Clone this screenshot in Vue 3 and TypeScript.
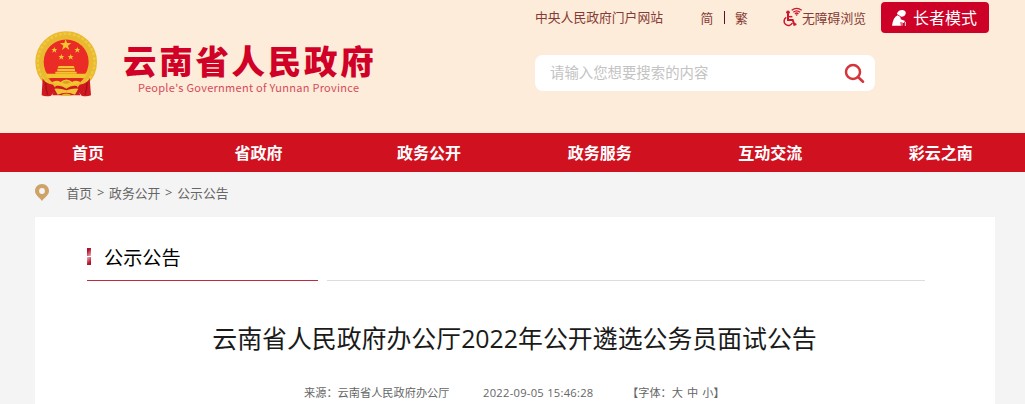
<!-- src/App.vue -->

<script setup lang="ts">
import { ref } from 'vue'

interface Link {
  label: string
  href: string
}

const navItems: Link[] = [
  { label: '首页', href: '#' },
  { label: '省政府', href: '#' },
  { label: '政务公开', href: '#' },
  { label: '政务服务', href: '#' },
  { label: '互动交流', href: '#' },
  { label: '彩云之南', href: '#' },
]

const crumbs: Link[] = [
  { label: '首页', href: '#' },
  { label: '政务公开', href: '#' },
  { label: '公示公告', href: '#' },
]

const fontSizes = ['大', '中', '小']

const keyword = ref('')
</script>

<template>
  <div class="page">
    <header class="header">
      <div class="brand">
        <svg class="emblem" viewBox="27 30 192 204">
          <circle cx="123.500" cy="126" r="80" fill="#ea2b26" stroke="#e9b92f" stroke-width="25" />
          <circle cx="123.500" cy="126" r="85" fill="none" stroke="#f1c940" stroke-width="7" stroke-dasharray="9 5" />
          <path d="M53 174 Q58 190 84 194 L94 208 L78 227 Q64 231 50 226 Z" fill="#cf1820" />
          <path d="M194 174 Q189 190 164 194 L154 208 L170 227 Q184 231 198 226 Z" fill="#cf1820" />
          <path d="M62 188 Q62 208 68 224 M186 188 Q186 208 180 224" fill="none" stroke="#a80e17" stroke-width="4" />
          <g fill="#f2c52f">
            <path d="M122 57 L126 69 L139 69 L129 77 L133 90 L122 82 L111 90 L115 77 L105 69 L118 69 Z" />
            <path id="star" d="M88 81 L90.500 87 L97 87 L92 91 L94 98 L88 94 L82 98 L84 91 L79 87 L85.500 87 Z" />
            <use href="#star" x="69" />
            <use href="#star" x="21" y="21" />
            <use href="#star" x="49" y="21" />
            <path d="M101 138 h45 l3 6 h-51 z M97 146 h53 v8 h-53 z M91 155 h64 v6 h-64 z" />
            <path d="M61 161 H186 Q184 169 179 174 H68 Q63 169 61 161 Z" />
          </g>
          <path d="M70 175 H177 L166 186 H81 Z" fill="#dd2922" />
          <path d="M82 186 Q98 178 106 186 Q124 171 142 186 Q150 178 166 186 Q158 198 143 194 Q124 208 105 194 Q90 198 82 186 Z" fill="#f2c52f" />
          <path d="M111 187 Q124 177 137 187 Q124 197 111 187 Z" fill="#d8a326" />
          <path d="M92 198 Q108 194 124 206 Q140 194 156 198 L166 226 H82 Z" fill="#cf1820" />
          <path d="M88 206 Q106 204 124 211 Q142 204 160 206 L150 224 Q124 213 98 224 Z" fill="#f0c437" />
          <path d="M106 227 Q124 214 142 227 Z" fill="#e5b22d" />
        </svg>
        <div class="brand-text">
          <h1>云南省人民政府</h1>
          <p>People's Government of Yunnan Province</p>
        </div>
      </div>

      <div class="tools">
        <div class="top-links">
          <a class="portal" href="#">中央人民政府门户网站</a>
          <a class="simplified" href="#">简</a>
          <span class="divider"></span>
          <a class="traditional" href="#">繁</a>
          <a class="barrier-free" href="#">
            <svg class="wheelchair" viewBox="36 21 63 63" fill="none" stroke="#cc1730">
              <circle cx="54" cy="37" r="5.500" fill="#cc1730" stroke="none" />
              <path d="M54 40 V60 H68 L73 74 L79 72" stroke-width="6" />
              <path d="M54 50 H67" stroke-width="4.500" />
              <path d="M49 52 A13 13 0 1 0 67 69" stroke-width="4.500" />
              <path d="M65 31 Q80 19 95 31 M70 37 Q80 28 90 37 M75 42 Q80 36 85 42" stroke-width="4" />
              <circle cx="80" cy="45" r="2.500" fill="#cc1730" stroke="none" />
            </svg>
            <span>无障碍浏览</span>
          </a>
          <a class="elder-mode" href="#">
            <svg class="elder" viewBox="363 27 48 54" fill="#fff">
              <path d="M381 40 Q386 29 398 30 Q409 32 407 42 Q404 51 394 50 Q390 49 386 45 Q380 44 381 40 Z" />
              <path d="M383 46 Q370 51 366 77 H393 L391 67 L401 69 Q406 64 400 61 L392 58 Q393 53 390 50 Z" />
              <path d="M398 65 Q404 61 406 66 V78 M396 69 V77" fill="none" stroke="#fff" stroke-width="2.500" />
            </svg>
            <span>长者模式</span>
          </a>
        </div>
        <form class="search" @submit.prevent>
          <input v-model="keyword" type="text" placeholder="请输入您想要搜索的内容" />
          <button type="submit" aria-label="搜索">
            <svg viewBox="222 186 63 63" fill="none" stroke="#d4353c">
              <circle cx="249" cy="213" r="21" stroke-width="7.500" />
              <path d="M264 228 L279 242" stroke-width="8" stroke-linecap="round" />
            </svg>
          </button>
        </form>
      </div>
    </header>

    <nav class="nav">
      <a v-for="item in navItems" :key="item.label" :href="item.href">{{ item.label }}</a>
    </nav>

    <div class="crumbs">
      <svg class="pin" viewBox="0 0 14 17">
        <path d="M7 0 C3 0 0 3 0 7 C0 11 4 13 7 17 C10 13 14 11 14 7 C14 3 11 0 7 0 Z" fill="#cda369" />
        <circle cx="7" cy="7" r="2.900" fill="#f4f4f4" />
      </svg>
      <template v-for="(crumb, i) in crumbs" :key="crumb.label">
        <span v-if="i > 0" class="sep">&gt;</span>
        <a :href="crumb.href">{{ crumb.label }}</a>
      </template>
    </div>

    <main class="panel">
      <div class="section-head">
        <h2>
          <span class="marker"><i></i><i></i></span>
          公示公告
        </h2>
        <div class="rule"></div>
      </div>
      <h3 class="title">云南省人民政府办公厅2022年公开遴选公务员面试公告</h3>
      <div class="meta">
        <span class="source">来源：云南省人民政府办公厅</span>
        <span class="date">2022-09-05 15:46:28</span>
        <span class="sizes">【字体：<a v-for="size in fontSizes" :key="size" href="#">{{ size }}</a>】</span>
      </div>
    </main>
  </div>
</template>

<style>
body {
  margin: 0;
  overflow: hidden;
}
</style>

<style scoped>
.page {
  height: 404px;
  overflow: hidden;
  display: flex;
  flex-direction: column;
  background: #f4f4f4;
  font-family: "Open Sans", "Noto Sans CJK SC", sans-serif;
}

a {
  color: inherit;
  text-decoration: none;
}

h1,
h2,
h3,
p {
  margin: 0;
}

svg {
  display: block;
  flex: none;
}

.header {
  display: flex;
  height: 133px;
  flex: none;
  background: #fdecd9;
}

.brand {
  display: flex;
  width: 501px;
  padding: 30px 0 0 34px;
  box-sizing: border-box;
}

.emblem {
  width: 64px;
  height: 68px;
}

.brand-text {
  margin-left: 25px;
  padding-top: 11px;
  color: #d00027;
  white-space: nowrap;
}

.brand-text h1 {
  font-family: "Noto Sans CJK SC", sans-serif;
  font-size: 33.500px;
  font-weight: 900;
  line-height: 38px;
  letter-spacing: 2.700px;
}

.brand-text p {
  padding-left: 15px;
  font-family: "Noto Sans CJK SC", sans-serif;
  font-size: 11px;
  line-height: 16px;
  letter-spacing: 0.28px;
  color: #d54a5a;
}

.tools {
  padding-left: 34px;
}

.top-links {
  display: flex;
  align-items: center;
  height: 31px;
  padding-top: 2px;
  font-size: 12.8px;
  line-height: 20px;
  color: #853b35;
  white-space: nowrap;
}

.portal {
  width: 165.500px;
  padding-bottom: 2px;
}

.simplified {
  width: 23.500px;
}

.divider {
  width: 1px;
  height: 13px;
  margin-right: 10px;
  background: #5e1020;
}

.traditional {
  width: 47px;
}

.barrier-free {
  display: flex;
  align-items: center;
  width: 99px;
}

.wheelchair {
  width: 21px;
  height: 21px;
  margin-right: -1px;
}

.elder-mode {
  display: flex;
  align-items: center;
  width: 108px;
  height: 31px;
  padding-left: 10px;
  box-sizing: border-box;
  border-radius: 4px;
  background: #cd0027;
  color: #fff;
  font-size: 16px;
}

.elder {
  width: 16px;
  height: 18px;
  margin-right: 6px;
}

.search {
  display: flex;
  align-items: center;
  width: 340px;
  height: 36px;
  margin-top: 22px;
  border-radius: 8px;
  background: #fff;
}

.search input {
  width: 309px;
  height: 36px;
  padding: 0 15px 1px;
  box-sizing: border-box;
  border: none;
  outline: none;
  background: transparent;
  font-family: inherit;
  font-size: 14.4px;
}

.search input::placeholder {
  color: #c3c3c3;
}

.search button {
  padding: 0;
  border: none;
  background: transparent;
  cursor: pointer;
}

.search button svg {
  width: 21px;
  height: 21px;
}

.nav {
  display: grid;
  grid-template-columns: repeat(6, 170.600px);
  height: 39px;
  flex: none;
  padding-left: 2.600px;
  background: #d01120;
  color: #fff;
  font-size: 16px;
  font-weight: 700;
  line-height: 40px;
  text-align: center;
}

.crumbs {
  display: flex;
  align-items: center;
  height: 40px;
  padding: 0 0 5px 35px;
  flex: none;
  color: #666;
  font-size: 12.8px;
}

.pin {
  width: 14px;
  height: 17px;
  margin-right: 17.500px;
}

.sep {
  width: 17px;
  text-align: center;
}

.panel {
  width: 960px;
  height: 187px;
  margin-left: 35px;
  padding: 20px 70px 0 52px;
  box-sizing: border-box;
  flex: none;
  background: #fff;
}

.section-head {
  display: flex;
  gap: 9px;
  height: 44px;
}

.section-head h2 {
  display: flex;
  align-items: center;
  width: 231px;
  border-bottom: 1px solid #c02a3c;
  box-sizing: border-box;
  padding-bottom: 4px;
  color: #000;
  font-size: 19.2px;
  font-weight: 400;
}

.marker {
  display: flex;
  flex-direction: column;
  gap: 1px;
  width: 4px;
  margin-right: 13px;
}

.marker i {
  height: 8px;
  background: linear-gradient(135deg, #b5112b 30%, #eeb5bf);
}

.marker i:last-child {
  background: linear-gradient(315deg, #b5112b 30%, #eeb5bf);
}

.rule {
  flex: 1;
  border-bottom: 1px solid #ddd;
}

.title {
  margin: 39px -9px 0 8px;
  color: #1a1a1a;
  font-size: 24.900px;
  font-weight: 400;
  line-height: 36px;
  text-align: center;
  white-space: nowrap;
}

.meta {
  display: flex;
  padding: 27px 0 0 217px;
  color: #666;
  font-size: 11.2px;
  line-height: 20px;
  white-space: nowrap;
}

.source {
  width: 179px;
}

.date {
  width: 144px;
  letter-spacing: 0.26px;
}

.sizes a + a {
  margin-left: 4px;
}
</style>
